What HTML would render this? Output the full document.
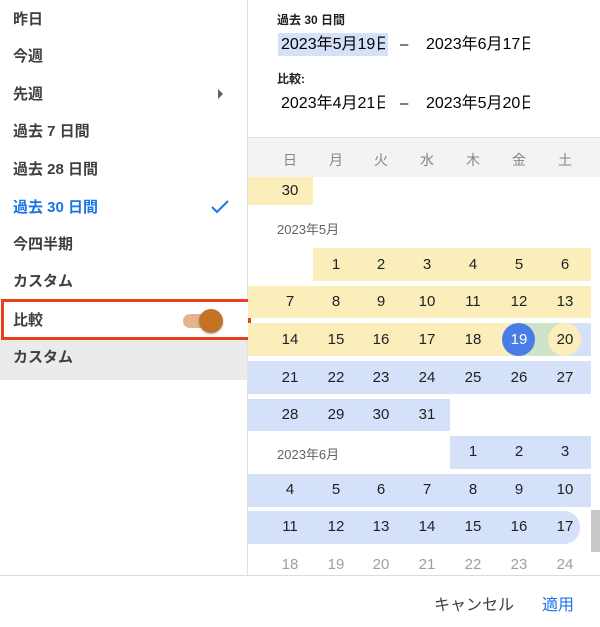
<!DOCTYPE html>
<html><head><meta charset="utf-8"><style>
*{margin:0;padding:0;box-sizing:border-box}
body{width:600px;height:627px;background:#fff;position:relative;overflow:hidden;font-family:"Liberation Sans","Noto Sans CJK JP",sans-serif;color:#3c4043}
.a{position:absolute}
.m{position:absolute;left:13px;font-size:15px;font-weight:bold;color:#3c4043;line-height:20px}
.bar{position:absolute;height:33px}
.y{background:#fbeebb}.b{background:#d4e1f9}
.d{position:absolute;width:46px;text-align:center;font-size:15px;color:#202124;line-height:16px}
.g{color:#9aa0a6}
.w{position:absolute;top:150px;width:46px;text-align:center;font-size:14px;color:#80868b}
.dt{position:absolute;font-size:16px;line-height:20px;color:#000;width:104px;overflow:hidden;white-space:nowrap}
</style></head><body>
<!-- left -->
<div class="a" style="left:247px;top:0;width:1px;height:575px;background:#e0e0e0"></div>
<div class="m" style="top:10px">昨日</div>
<div class="m" style="top:47px">今週</div>
<div class="m" style="top:85px">先週</div>
<div class="a" style="left:218px;top:89px;width:0;height:0;border-top:5px solid transparent;border-bottom:5px solid transparent;border-left:5px solid #5f6368"></div>
<div class="m" style="top:122px">過去 7 日間</div>
<div class="m" style="top:160px">過去 28 日間</div>
<div class="m" style="top:198px;color:#1a73e8">過去 30 日間</div>
<svg class="a" style="left:209px;top:198px" width="22" height="18"><path d="M3 9 L8 14 L19 3" stroke="#1a73e8" stroke-width="2" fill="none"/></svg>
<div class="m" style="top:235px">今四半期</div>
<div class="m" style="top:272px">カスタム</div>
<div class="a" style="left:0;top:340px;width:247px;height:40px;background:#ebebeb"></div>
<div class="m" style="top:348px">カスタム</div>
<div class="a" style="left:1px;top:299px;width:250px;height:41px;border:3px solid #e8401a;background:#fff"></div>
<div class="m" style="top:311px">比較</div>
<div class="a" style="left:183px;top:314px;width:36px;height:14px;border-radius:7px;background:#e3b48e"></div>
<div class="a" style="left:199px;top:309px;width:24px;height:24px;border-radius:12px;background:#c47325;box-shadow:0 1px 2px rgba(0,0,0,.3)"></div>
<!-- header -->
<div class="a" style="left:277px;top:11px;font-size:12px;font-weight:bold;color:#202124">過去 30 日間</div>
<div class="a" style="left:278px;top:33px;width:110px;height:23px;background:#d4e1f9"></div>
<div class="dt" style="left:281px;top:35px">2023年5月19日</div>
<div class="a" style="left:400px;top:35px;font-size:15px;line-height:20px;color:#000">–</div>
<div class="dt" style="left:426px;top:35px">2023年6月17日</div>
<div class="a" style="left:277px;top:70px;font-size:12px;font-weight:bold;color:#202124">比較:</div>
<div class="dt" style="left:281px;top:94px">2023年4月21日</div>
<div class="a" style="left:400px;top:94px;font-size:15px;line-height:20px;color:#000">–</div>
<div class="dt" style="left:426px;top:94px">2023年5月20日</div>
<div class="a" style="left:248px;top:137px;width:352px;height:40px;background:#f3f3f3;border-top:1px solid #e0e0e0"></div>
<div class="w" style="left:267px">日</div><div class="w" style="left:313px">月</div><div class="w" style="left:358px">火</div><div class="w" style="left:404px">水</div><div class="w" style="left:450px">木</div><div class="w" style="left:496px">金</div><div class="w" style="left:542px">土</div>
<!-- bars -->
<div class="bar y" style="left:248px;top:177px;width:65px;height:28px"></div>
<div class="a" style="left:277px;top:219px;font-size:13px;color:#5f6368">2023年5月</div>
<div class="bar y" style="left:313px;top:248px;width:278px"></div>
<div class="bar y" style="left:248px;top:286px;width:343px;height:32px"></div>
<div class="bar b" style="left:542px;top:323px;width:49px"></div>
<div class="bar y" style="left:248px;top:323px;width:272px"></div>
<div class="bar" style="left:519px;top:323px;width:46px;background:#cfe3c8"></div>
<div class="a" style="left:502px;top:323px;width:33px;height:33px;border-radius:50%;background:#4a7ce8"></div>
<div class="a" style="left:548px;top:323px;width:33px;height:33px;border-radius:50%;background:#fbeebb"></div>
<div class="bar b" style="left:248px;top:361px;width:343px"></div>
<div class="bar b" style="left:248px;top:399px;width:202px;height:32px"></div>
<div class="a" style="left:277px;top:444px;font-size:13px;color:#5f6368">2023年6月</div>
<div class="bar b" style="left:450px;top:436px;width:141px"></div>
<div class="bar b" style="left:248px;top:474px;width:343px"></div>
<div class="bar b" style="left:248px;top:511px;width:332px;border-radius:0 16px 16px 0"></div>
<div class="a" style="left:591px;top:510px;width:9px;height:42px;background:#c8c8c8"></div>
<!-- days -->
<div class="d" style="left:267px;top:183px">30</div>
<div class="d" style="left:313px;top:257px">1</div><div class="d" style="left:358px;top:257px">2</div><div class="d" style="left:404px;top:257px">3</div><div class="d" style="left:450px;top:257px">4</div><div class="d" style="left:496px;top:257px">5</div><div class="d" style="left:542px;top:257px">6</div>
<div class="d" style="left:267px;top:294px">7</div><div class="d" style="left:313px;top:294px">8</div><div class="d" style="left:358px;top:294px">9</div><div class="d" style="left:404px;top:294px">10</div><div class="d" style="left:450px;top:294px">11</div><div class="d" style="left:496px;top:294px">12</div><div class="d" style="left:542px;top:294px">13</div>
<div class="d" style="left:267px;top:332px">14</div><div class="d" style="left:313px;top:332px">15</div><div class="d" style="left:358px;top:332px">16</div><div class="d" style="left:404px;top:332px">17</div><div class="d" style="left:450px;top:332px">18</div><div class="d" style="left:496px;top:332px;color:#fff">19</div><div class="d" style="left:542px;top:332px">20</div>
<div class="d" style="left:267px;top:370px">21</div><div class="d" style="left:313px;top:370px">22</div><div class="d" style="left:358px;top:370px">23</div><div class="d" style="left:404px;top:370px">24</div><div class="d" style="left:450px;top:370px">25</div><div class="d" style="left:496px;top:370px">26</div><div class="d" style="left:542px;top:370px">27</div>
<div class="d" style="left:267px;top:407px">28</div><div class="d" style="left:313px;top:407px">29</div><div class="d" style="left:358px;top:407px">30</div><div class="d" style="left:404px;top:407px">31</div>
<div class="d" style="left:450px;top:444px">1</div><div class="d" style="left:496px;top:444px">2</div><div class="d" style="left:542px;top:444px">3</div>
<div class="d" style="left:267px;top:482px">4</div><div class="d" style="left:313px;top:482px">5</div><div class="d" style="left:358px;top:482px">6</div><div class="d" style="left:404px;top:482px">7</div><div class="d" style="left:450px;top:482px">8</div><div class="d" style="left:496px;top:482px">9</div><div class="d" style="left:542px;top:482px">10</div>
<div class="d" style="left:267px;top:519px">11</div><div class="d" style="left:313px;top:519px">12</div><div class="d" style="left:358px;top:519px">13</div><div class="d" style="left:404px;top:519px">14</div><div class="d" style="left:450px;top:519px">15</div><div class="d" style="left:496px;top:519px">16</div><div class="d" style="left:542px;top:519px">17</div>
<div class="a" style="left:248px;top:555px;width:352px;height:20px;overflow:hidden">
<div class="d g" style="left:19px;top:2px">18</div><div class="d g" style="left:65px;top:2px">19</div><div class="d g" style="left:110px;top:2px">20</div><div class="d g" style="left:156px;top:2px">21</div><div class="d g" style="left:202px;top:2px">22</div><div class="d g" style="left:248px;top:2px">23</div><div class="d g" style="left:294px;top:2px">24</div>
</div>
<!-- footer -->
<div class="a" style="left:0;top:575px;width:600px;height:1px;background:#dadce0"></div>
<div class="a" style="left:434px;top:591px;font-size:16px;color:#3c4043">キャンセル</div>
<div class="a" style="left:542px;top:591px;font-size:16px;color:#1a73e8">適用</div>
</body></html>
